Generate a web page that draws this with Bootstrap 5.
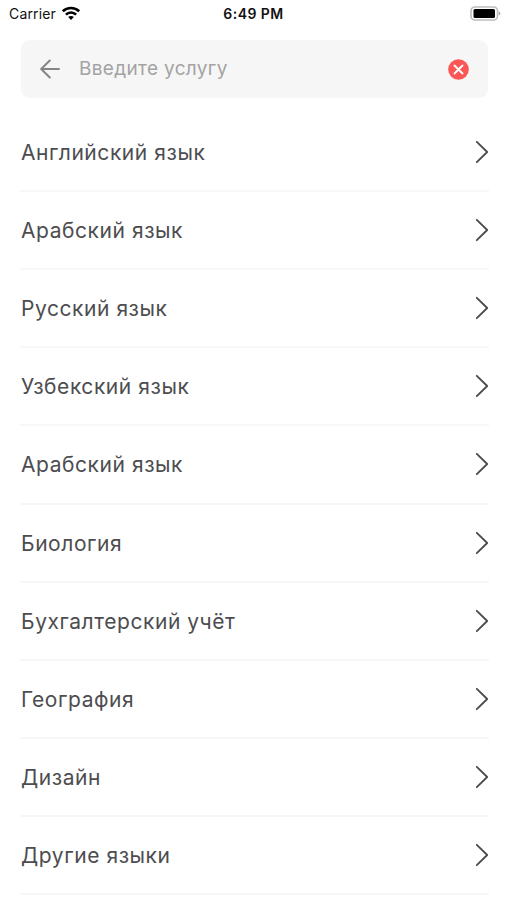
<!DOCTYPE html>
<html lang="ru">
<head>
<meta charset="utf-8">
<meta name="viewport" content="width=device-width, initial-scale=1">
<title>Услуги</title>
<link href="https://cdn.jsdelivr.net/npm/bootstrap@5.3.0/dist/css/bootstrap.min.css" rel="stylesheet">
<style>
body{font-family:Inter,"Liberation Sans",sans-serif;background:#fff;height:900px;overflow:hidden}
.status-bar{height:40px;padding:0 6px 13px 9px;color:#111;font-size:14px;line-height:27px}
.status-side{flex:1 1 0}
.carrier{letter-spacing:.15px}
.wifi{margin-left:5px;margin-bottom:1px}
.clock{font-weight:600;font-size:14px;letter-spacing:.45px;margin-right:3px}
.search-box{height:58px;margin:0 19px 0 21px;padding:0 19px;background:#f6f6f6;border-radius:9px}
.search-hint{color:#a3a3a3;font-size:19px;letter-spacing:.33px;margin-left:19px;padding-top:1px}
.services{margin:15.6px 18px 0 20px}
.services .list-group-item{height:78.2px;padding:0 0 0 1px;border-color:#f7f7f7;border-width:0 0 2px;color:#4d4d50;font-size:21px;letter-spacing:.56px}
.services .list-group-item:last-child{border-bottom-width:2px}
.services span{padding-top:1.4px}
.services svg{margin-right:.5px}
</style>
<script src="https://cdn.jsdelivr.net/npm/bootstrap@5.3.0/dist/js/bootstrap.bundle.min.js"></script>
</head>
<body>
<svg class="d-none"><symbol id="chev" viewBox="0 0 14 24"><path d="M1.800 1.800 12.200 12 1.800 22.200" fill="none" stroke="#4a4a4c" stroke-width="1.800" stroke-linecap="round" stroke-linejoin="round"/></symbol></svg>
<header class="status-bar d-flex align-items-center">
<div class="status-side d-flex align-items-center"><span class="carrier">Carrier</span>
<svg class="wifi" width="20" height="15" viewBox="0 0 20 15" fill="none" stroke="#000" stroke-width="2.6"><path d="M1.800 5.300a11.700 11.700 0 0 1 16.400 0M4.900 8.600a7.200 7.200 0 0 1 10.200 0"/><path d="M10 14 7.200 11.100a3.900 3.900 0 0 1 5.600 0Z" fill="#000" stroke="none"/></svg></div>
<span class="clock">6:49 PM</span>
<div class="status-side d-flex justify-content-end"><svg width="31" height="15" viewBox="0 0 31 15"><rect x="1" y="1" width="26.500" height="13" rx="4" fill="#fff" stroke="#bdbdbd" stroke-width="1.600"/><rect x="3.500" y="3" width="21.500" height="9" rx="1.500"/><path d="M28.700 5.300q3.400 2.200 0 4.400Z" fill="#aaa"/></svg></div>
</header>
<div class="search-box d-flex align-items-center">
<svg width="20" height="20" viewBox="0 0 20 20" fill="none" stroke="#858585" stroke-width="2" stroke-linecap="round" stroke-linejoin="round"><path d="M19 10H1.500M9.800 1.500 1.200 10l8.600 8.500"/></svg>
<span class="search-hint">Введите услугу</span>
<svg class="ms-auto" width="21" height="21" viewBox="0 0 21 21"><circle cx="10.500" cy="10.500" r="10.300" fill="#fb5556"/><path d="m6.500 6.500 8 8m0-8-8 8" stroke="#fff" stroke-width="1.900" stroke-linecap="round"/></svg>
</div>
<main class="services list-group list-group-flush">
<div class="list-group-item d-flex align-items-center justify-content-between"><span>Английский язык</span><svg width="14" height="24"><use href="#chev"/></svg></div>
<div class="list-group-item d-flex align-items-center justify-content-between"><span>Арабский язык</span><svg width="14" height="24"><use href="#chev"/></svg></div>
<div class="list-group-item d-flex align-items-center justify-content-between"><span>Русский язык</span><svg width="14" height="24"><use href="#chev"/></svg></div>
<div class="list-group-item d-flex align-items-center justify-content-between"><span>Узбекский язык</span><svg width="14" height="24"><use href="#chev"/></svg></div>
<div class="list-group-item d-flex align-items-center justify-content-between"><span>Арабский язык</span><svg width="14" height="24"><use href="#chev"/></svg></div>
<div class="list-group-item d-flex align-items-center justify-content-between"><span>Биология</span><svg width="14" height="24"><use href="#chev"/></svg></div>
<div class="list-group-item d-flex align-items-center justify-content-between"><span>Бухгалтерский учёт</span><svg width="14" height="24"><use href="#chev"/></svg></div>
<div class="list-group-item d-flex align-items-center justify-content-between"><span>География</span><svg width="14" height="24"><use href="#chev"/></svg></div>
<div class="list-group-item d-flex align-items-center justify-content-between"><span>Дизайн</span><svg width="14" height="24"><use href="#chev"/></svg></div>
<div class="list-group-item d-flex align-items-center justify-content-between"><span>Другие языки</span><svg width="14" height="24"><use href="#chev"/></svg></div>
</main>
</body>
</html>
